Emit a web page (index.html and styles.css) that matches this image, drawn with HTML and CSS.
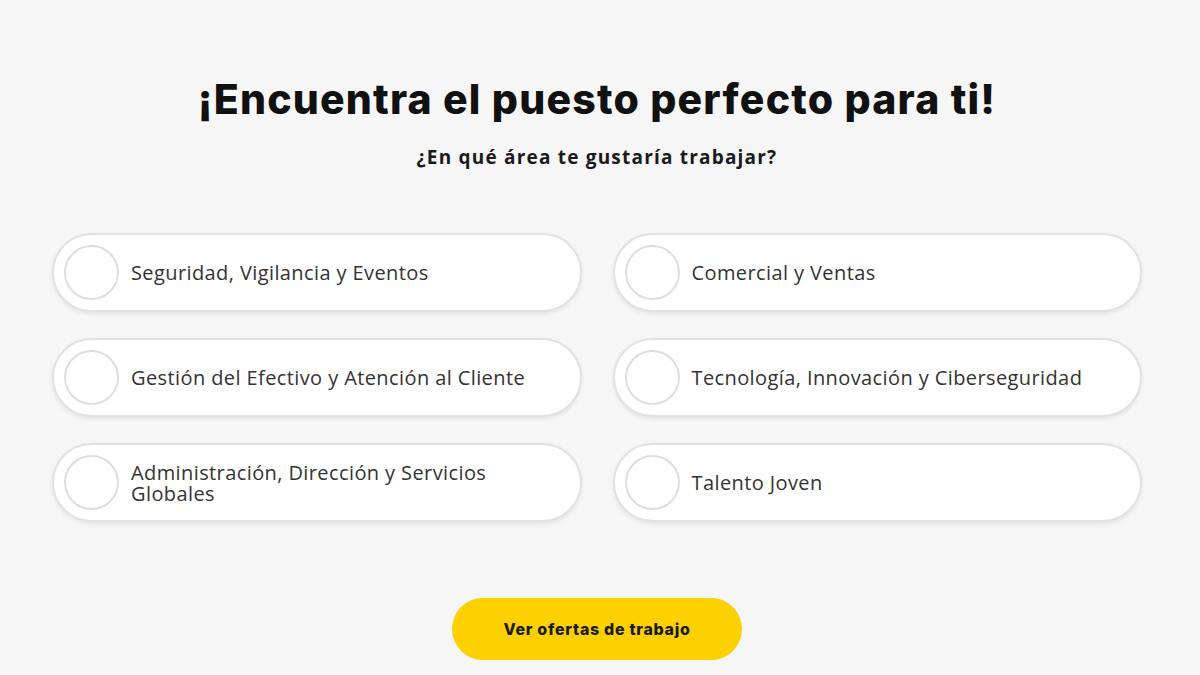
FILE: index.html
```html
<!DOCTYPE html>
<html lang="es">
<head>
<meta charset="utf-8">
<title>Encuentra el puesto perfecto</title>
<link rel="stylesheet" href="styles.css">
</head>
<body>
<main class="page">
  <h1 class="title">¡Encuentra el puesto perfecto para ti!</h1>
  <p class="subtitle">¿En qué área te gustaría trabajar?</p>
  <div class="options">
    <label class="option"><span class="radio"></span><span class="label">Seguridad, Vigilancia y Eventos</span></label>
    <label class="option"><span class="radio"></span><span class="label">Comercial y Ventas</span></label>
    <label class="option"><span class="radio"></span><span class="label">Gestión del Efectivo y Atención al Cliente</span></label>
    <label class="option"><span class="radio"></span><span class="label">Tecnología, Innovación y Ciberseguridad</span></label>
    <label class="option"><span class="radio"></span><span class="label">Administración, Dirección y Servicios Globales</span></label>
    <label class="option"><span class="radio"></span><span class="label">Talento Joven</span></label>
  </div>
  <div class="actions">
    <button class="cta">Ver ofertas de trabajo</button>
  </div>
</main>
</body>
</html>
```
FILE: styles.css
```css
html, body {
  margin: 0;
  padding: 0;
  background: #f6f6f6;
}
body {
  font-family: "Open Sans", "Liberation Sans", sans-serif;
  color: #333;
}
.page {
  width: 1090px;
  margin: 0 auto;
  padding-top: 74px;
  transform: translateX(-3px);
}
.title {
  margin: 0;
  text-align: center;
  font-family: Inter, "Liberation Sans", sans-serif;
  font-weight: 800;
  font-size: 41px;
  line-height: 50px;
  letter-spacing: 1.2px;
  color: #111;
}
.subtitle {
  margin: 20px 0 0;
  text-align: center;
  font-weight: 700;
  font-size: 19px;
  line-height: 26px;
  letter-spacing: 1.2px;
  color: #1a1a1a;
}
.options {
  margin-top: 63px;
  display: grid;
  grid-template-columns: 1fr 1fr;
  column-gap: 31px;
  row-gap: 26px;
}
.option {
  box-sizing: border-box;
  height: 79px;
  display: flex;
  align-items: center;
  padding: 0 30px 0 10px;
  background: #fff;
  border: 2px solid #e2e2e2;
  border-radius: 40px;
  box-shadow: 0 2px 4px rgba(0,0,0,0.08);
}
.radio {
  flex: none;
  box-sizing: border-box;
  width: 55px;
  height: 55px;
  border-radius: 50%;
  border: 2px solid #dedede;
  background: #fff;
  margin-right: 12px;
}
.label {
  font-size: 20px;
  line-height: 21px;
  letter-spacing: 0.4px;
  color: #333;
}
.actions {
  display: flex;
  justify-content: center;
  margin-top: 76px;
}
.cta {
  width: 290px;
  height: 62px;
  border: none;
  border-radius: 31px;
  background: #fdd000;
  font-family: Inter, "Liberation Sans", sans-serif;
  font-weight: 800;
  font-size: 16px;
  letter-spacing: 0.7px;
  color: #1a1a1a;
}
```
